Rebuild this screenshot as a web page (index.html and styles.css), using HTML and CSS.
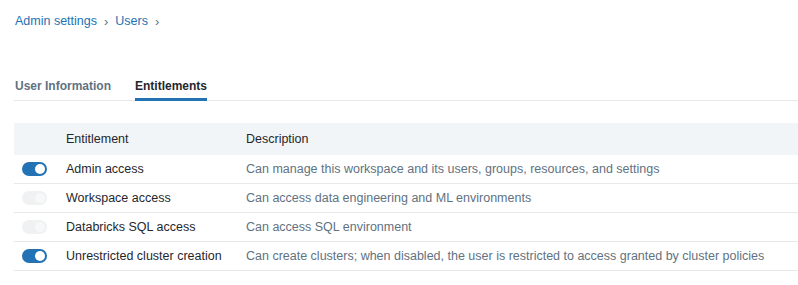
FILE: index.html
```html
<!DOCTYPE html>
<html lang="en">
<head>
  <meta charset="UTF-8">
  <title>User entitlements</title>
  <link rel="stylesheet" href="styles.css">
</head>
<body>

<nav class="crumbs">
  <a href="#">Admin settings</a>
  <span class="sep">&rsaquo;</span>
  <a href="#">Users</a>
  <span class="sep">&rsaquo;</span>
</nav>

<div class="tabs">
  <div class="tab">User Information</div>
  <div class="tab active">Entitlements</div>
</div>

<table class="ent">
  <thead>
    <tr>
      <th class="sw"></th>
      <th class="name">Entitlement</th>
      <th>Description</th>
    </tr>
  </thead>
  <tbody>
    <tr>
      <td class="sw"><span class="toggle on"></span></td>
      <td class="name">Admin access</td>
      <td class="desc">Can manage this workspace and its users, groups, resources, and settings</td>
    </tr>
    <tr>
      <td class="sw"><span class="toggle off"></span></td>
      <td class="name">Workspace access</td>
      <td class="desc">Can access data engineering and ML environments</td>
    </tr>
    <tr>
      <td class="sw"><span class="toggle off"></span></td>
      <td class="name">Databricks SQL access</td>
      <td class="desc">Can access SQL environment</td>
    </tr>
    <tr>
      <td class="sw"><span class="toggle on"></span></td>
      <td class="name">Unrestricted cluster creation</td>
      <td class="desc">Can create clusters; when disabled, the user is restricted to access granted by cluster policies</td>
    </tr>
  </tbody>
</table>

</body>
</html>
```

FILE: styles.css
```css
body {
  margin: 0;
  padding: 13px 0 0 14px;
  font-family: "Liberation Sans", Arial, sans-serif;
  font-size: 12.5px;
  line-height: 15px;
  color: #1f272d;
  background: #fff;
}
.crumbs {
  display: flex;
  align-items: center;
  gap: 7px;
  height: 16px;
  padding-left: 1px;
}
.crumbs a {
  color: #2272b4;
  text-decoration: none;
}
.crumbs .sep {
  color: #5f7281;
  font-size: 13px;
}
.tabs {
  display: flex;
  gap: 24px;
  margin-top: 50px;
  border-bottom: 1px solid #e6e9eb;
  padding-left: 1px;
}
.tab {
  font-size: 12px;
  line-height: 14px;
  font-weight: bold;
  color: #5f7281;
  padding-bottom: 5px;
  border-bottom: 3px solid transparent;
  margin-bottom: -1px;
}
.tab.active {
  color: #1f272d;
  border-bottom-color: #2272b4;
}
.ent {
  width: 100%;
  margin-top: 22px;
  border-collapse: collapse;
}
.ent th {
  background: #f2f5f7;
  font-weight: normal;
  text-align: left;
  height: 32px;
  padding: 0 8px;
}
.ent td {
  height: 28px;
  padding: 0 8px;
  border-bottom: 1px solid #e6e9eb;
}
.ent .sw {
  width: 28px;
}
.ent .name {
  width: 164px;
}
.ent .desc {
  color: #5f7281;
}
.toggle {
  display: block;
  position: relative;
  width: 25px;
  height: 14px;
  border-radius: 7px;
}
.toggle::after {
  content: "";
  position: absolute;
  top: 2px;
  right: 2px;
  width: 10px;
  height: 10px;
  border-radius: 50%;
  background: #fff;
}
.toggle.on {
  background: #2272b4;
}
.toggle.off {
  background: #f0f1f2;
}
.toggle.off::after {
  background: #f7f8f8;
}
```
